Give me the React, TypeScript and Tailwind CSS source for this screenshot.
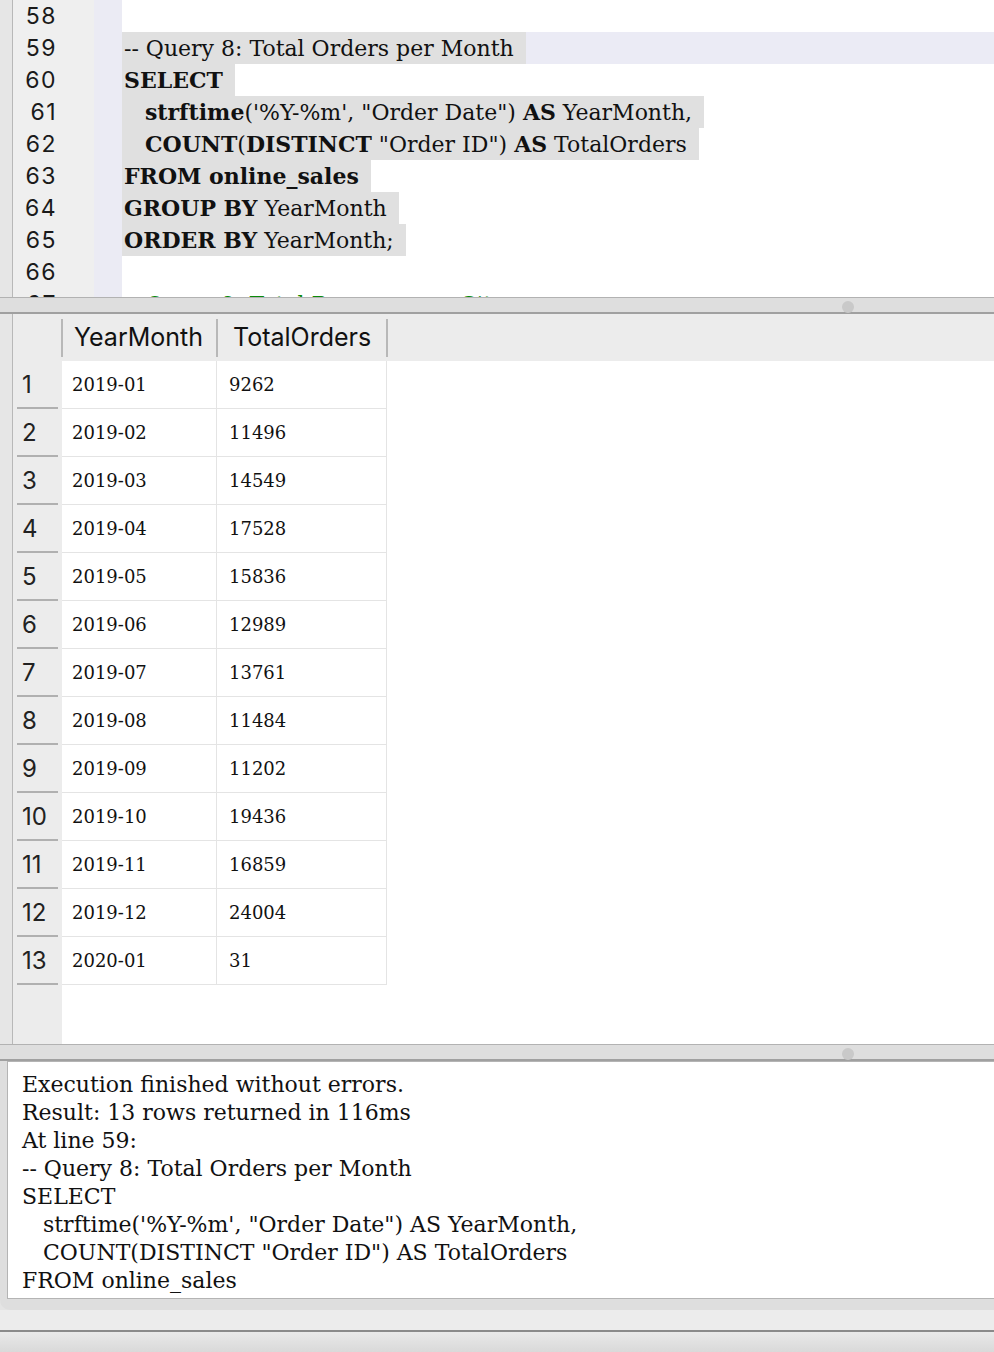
import React from "react";

const codeFont = { fontFamily: '"DejaVu Serif", "Liberation Serif", serif' };
const sansFont = { fontFamily: 'Inter, "Liberation Sans", sans-serif' };

type Seg = { t: string; b?: boolean };
type Line = { n: number; segs: Seg[]; sel?: boolean; current?: boolean; green?: string };

const lines: Line[] = [
  { n: 58, segs: [] },
  { n: 59, segs: [{ t: "-- Query 8: Total Orders per Month" }], sel: true, current: true },
  { n: 60, segs: [{ t: "SELECT", b: true }], sel: true },
  {
    n: 61,
    segs: [
      { t: "   " },
      { t: "strftime", b: true },
      { t: "('%Y-%m', \"Order Date\") " },
      { t: "AS", b: true },
      { t: " YearMonth," },
    ],
    sel: true,
  },
  {
    n: 62,
    segs: [
      { t: "   " },
      { t: "COUNT", b: true },
      { t: "(" },
      { t: "DISTINCT", b: true },
      { t: " \"Order ID\") " },
      { t: "AS", b: true },
      { t: " TotalOrders" },
    ],
    sel: true,
  },
  { n: 63, segs: [{ t: "FROM online_sales", b: true }], sel: true },
  { n: 64, segs: [{ t: "GROUP BY", b: true }, { t: " YearMonth" }], sel: true },
  { n: 65, segs: [{ t: "ORDER BY", b: true }, { t: " YearMonth;" }], sel: true },
  { n: 66, segs: [] },
  { n: 67, segs: [], green: "-- Query 9: Total Revenue per City" },
];

const rows: [string, string][] = [
  ["2019-01", "9262"],
  ["2019-02", "11496"],
  ["2019-03", "14549"],
  ["2019-04", "17528"],
  ["2019-05", "15836"],
  ["2019-06", "12989"],
  ["2019-07", "13761"],
  ["2019-08", "11484"],
  ["2019-09", "11202"],
  ["2019-10", "19436"],
  ["2019-11", "16859"],
  ["2019-12", "24004"],
  ["2020-01", "31"],
];

const messages = [
  "Execution finished without errors.",
  "Result: 13 rows returned in 116ms",
  "At line 59:",
  "-- Query 8: Total Orders per Month",
  "SELECT",
  "   strftime('%Y-%m', \"Order Date\") AS YearMonth,",
  "   COUNT(DISTINCT \"Order ID\") AS TotalOrders",
  "FROM online_sales",
];

function Splitter() {
  return (
    <div className="relative h-[17px] shrink-0 bg-[#dedede] border-t border-[#b2b2b2] border-b-2 border-b-[#a0a0a0]">
      <div className="absolute left-[842px] top-[3px] w-[12px] h-[12px] rounded-full bg-[#c9c9c9]" />
    </div>
  );
}

export default function App() {
  return (
    <div className="w-[994px] h-[1352px] overflow-hidden bg-[#e4e4e4] flex flex-col">
      {/* Editor */}
      <div className="h-[297px] shrink-0 flex">
        <div className="w-[12px] bg-[#e6e6e6]" />
        <div className="w-[82px] bg-[#efefef] border-l border-[#b8b8b8] overflow-hidden">
          {lines.map((l) => (
            <div
              key={l.n}
              className="h-[32px] w-[44px] flex items-center justify-end text-[23px] tracking-[1.5px] text-[#1a1a1a]"
              style={sansFont}
            >
              {l.n}
            </div>
          ))}
        </div>
        <div className="w-[28px] bg-[#ebebf4]" />
        <div className="flex-1 bg-white overflow-hidden" style={codeFont}>
          {lines.map((l) => (
            <div
              key={l.n}
              className={`h-[32px] flex items-center whitespace-pre text-[22px] text-[#111] ${
                l.current ? "bg-[#ebebf5]" : ""
              }`}
            >
              {l.segs.length > 0 && (
                <span className={`h-[32px] flex items-center pl-[2px] pr-[12px] ${l.sel ? "bg-[#e0e0e0]" : ""}`}>
                  {l.segs.map((s, i) => (
                    <span key={i} className={s.b ? "font-bold" : ""}>
                      {s.t}
                    </span>
                  ))}
                </span>
              )}
              {l.green && <span className="pl-[2px] text-[#0a8a0a]">{l.green}</span>}
            </div>
          ))}
        </div>
      </div>

      <Splitter />

      {/* Results grid */}
      <div className="h-[730px] shrink-0 flex">
        <div className="w-[12px] bg-[#e6e6e6]" />
        <div className="flex-1 bg-white border-l border-[#b8b8b8] flex flex-col relative">
          <div className="h-[47px] flex bg-[#ececec]" style={sansFont}>
            <div className="w-[49px] relative">
              <div className="absolute right-[-1px] top-[5px] h-[38px] w-[2px] bg-[#b8b8b8]" />
            </div>
            <div className="w-[155px] relative flex items-center pl-[12px] text-[25px] text-[#111]">
              YearMonth
              <div className="absolute right-[-1px] top-[5px] h-[38px] w-[2px] bg-[#b8b8b8]" />
            </div>
            <div className="w-[170px] relative flex items-center pl-[16px] text-[25px] text-[#111]">
              TotalOrders
              <div className="absolute right-[-1px] top-[5px] h-[38px] w-[2px] bg-[#b8b8b8]" />
            </div>
          </div>
          <div className="flex-1 flex">
            <div className="w-[49px] bg-[#ececec]">
              {rows.map((_, i) => (
                <div key={i} className="h-[48px] relative flex items-center pl-[9px] text-[24px] text-[#222]" style={sansFont}>
                  {i + 1}
                  <div className="absolute left-[4px] right-[4px] bottom-0 h-[2px] bg-[#b0b0b0]" />
                </div>
              ))}
            </div>
            <div className="flex flex-col" style={codeFont}>
              {rows.map((r, i) => (
                <div key={i} className="h-[48px] flex border-b border-[#e4e4e4]">
                  <div className="w-[155px] flex items-center pl-[10px] text-[18px] text-[#111] border-r border-[#e4e4e4]">{r[0]}</div>
                  <div className="w-[170px] flex items-center pl-[12px] text-[18px] text-[#111] border-r border-[#e4e4e4]">{r[1]}</div>
                </div>
              ))}
            </div>
          </div>
        </div>
      </div>

      <Splitter />

      {/* Messages */}
      <div className="h-[249px] shrink-0 bg-[#dedede] pl-[7px] pb-[11px] rounded-bl-[10px] flex">
        <div
          className="flex-1 bg-white border border-[#b4b4b4] border-r-0 pl-[14px] pt-[9px] text-[#111]"
          style={codeFont}
        >
          {messages.map((m, i) => (
            <div key={i} className="h-[28px] leading-[28px] text-[22px] whitespace-pre">
              {m}
            </div>
          ))}
        </div>
      </div>

      <div className="h-[20px] shrink-0 bg-[#ececec]" />
      <div className="flex-1 border-t-2 border-[#8a8a8a] bg-gradient-to-b from-[#e9e9e9] to-[#d9d9d9]" />
    </div>
  );
}
